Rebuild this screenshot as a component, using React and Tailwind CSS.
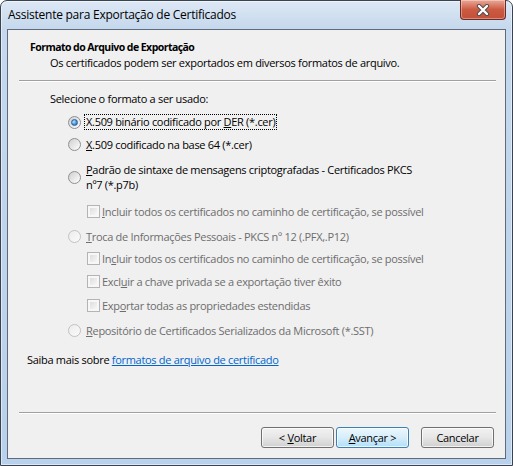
function Radio({ checked, disabled }) {
  if (disabled) {
    return (
      <span className="inline-flex h-[13px] w-[13px] shrink-0 items-center justify-center rounded-full border border-[#c2c2c2] bg-linear-to-br from-[#ececec] to-[#fafafa]" />
    );
  }
  return (
    <span className="inline-flex h-[13px] w-[13px] shrink-0 items-center justify-center rounded-full border border-[#8e8f8f] bg-linear-to-br from-[#cfcfcf] to-[#ffffff]">
      {checked && (
        <span className="h-[7px] w-[7px] rounded-full border border-[#2a5f9a] bg-[radial-gradient(circle_at_35%_35%,#b9e3fc,#3e8ddd_60%,#1e5a9e)]" />
      )}
    </span>
  );
}

function Check() {
  return (
    <span className="inline-flex h-[13px] w-[13px] shrink-0 border border-[#b4b4b4] bg-[#f7f7f7] p-[2px]">
      <span className="h-full w-full bg-linear-to-br from-[#dedede] to-[#f7f7f7]" />
    </span>
  );
}

function Separator({ className }) {
  return <div className={"ml-[11px] mr-[9px] h-[2px] border-t border-b border-t-[#a0a0a0] border-b-white " + className} />;
}

function Button({ children, primary }) {
  if (primary) {
    return (
      <button className="h-[21px] w-[73px] rounded-[3px] border border-[#3c7fb1] bg-linear-to-b from-[#ecf7fd] via-[#d6eefb] to-[#b3def7] text-[11px] leading-[19px] shadow-[inset_0_0_0_1px_rgba(255,255,255,0.7)]">
        {children}
      </button>
    );
  }
  return (
    <button className="h-[21px] w-[73px] rounded-[3px] border border-[#707070] bg-linear-to-b from-[#f2f2f2] via-[#e6e6e6] to-[#d0d0d0] text-[11px] leading-[19px] shadow-[inset_0_0_0_1px_rgba(255,255,255,0.7)]">
      {children}
    </button>
  );
}

export default function App() {
  return (
    <div className="h-[466px] w-[513px] bg-white font-['Open_Sans',sans-serif] text-[11px] tracking-[-0.3px] text-black">
      <div className="flex h-full flex-col rounded-t-[7px] border border-[#3a4350] bg-linear-to-b from-[#dde8f5] via-[#c5d8ed] via-[6%] to-[#b9d1ea] shadow-[inset_0_0_0_1px_rgba(255,255,255,0.5)]">
        {/* title bar */}
        <div className="flex h-[28px] items-start justify-between">
          <span className="pl-[7px] pt-[6px] text-[12px] leading-[16px] tracking-[-0.25px]">Assistente para Exportação de Certificados</span>
          <div className="-mt-px mr-[6px] flex h-[20px] w-[46px] items-center justify-center rounded-b-[4px] border border-t-0 border-[#6b2b22] bg-linear-to-b from-[#e9a898] via-[#cc5a42] to-[#c2503a] shadow-[inset_0_0_0_1px_rgba(255,255,255,0.35)]">
            <svg width="14" height="12" viewBox="0 0 14 12">
              <path d="M3 2 L11 10 M11 2 L3 10" stroke="#4b4b4b" strokeWidth="4.2" strokeLinecap="round" />
              <path d="M3 2 L11 10 M11 2 L3 10" stroke="#ffffff" strokeWidth="2.4" strokeLinecap="round" />
            </svg>
          </div>
        </div>

        {/* client */}
        <div className="mx-[6px] mb-[6px] flex flex-1 flex-col border border-[#5f6b7a] bg-[#f0f0f0]">
          <div className="pl-[22px] pt-[10px]">
            <div className="text-[10.5px] font-bold leading-[15px] tracking-[-0.55px]">Formato do Arquivo de Exportação</div>
            <div className="pl-[20px] leading-[15px]">Os certificados podem ser exportados em diversos formatos de arquivo.</div>
          </div>
          <Separator className="mt-[10px]" />

          <div className="mt-[9px] pl-[42px] leading-[15px]">Selecione o formato a ser usado:</div>

          <div className="flex flex-col pl-[60px] leading-[15px]">
            <div className="mt-[7px] flex h-[18px] items-center gap-[3px]">
              <Radio checked />
              <span className="border border-dotted border-black px-px leading-[14px]">
                X.509 binário codificado por <u>D</u>ER (*.cer)
              </span>
            </div>
            <div className="mt-[5px] flex h-[16px] items-center gap-[3px]">
              <Radio />
              <span className="border border-transparent px-px">
                <u>X</u>.509 codificado na base 64 (*.cer)
              </span>
            </div>
            <div className="mt-[9px] flex items-center gap-[3px]">
              <Radio />
              <span className="border border-transparent px-px">
                <u>P</u>adrão de sintaxe de mensagens criptografadas - Certificados PKCS
                <br />
                nº7 (*.p7b)
              </span>
            </div>
            <div className="mt-[10px] flex h-[16px] items-center gap-[2px] pl-[19px] text-[#6d6d6d]">
              <Check />
              <span>
                <u>I</u>ncluir todos os certificados no caminho de certificação, se possível
              </span>
            </div>
            <div className="mt-[9px] flex h-[16px] items-center gap-[3px] text-[#6d6d6d]">
              <Radio disabled />
              <span className="border border-transparent px-px">
                <u>T</u>roca de Informações Pessoais - PKCS nº 12 (.PFX,.P12)
              </span>
            </div>
            <div className="mt-[6px] flex h-[16px] items-center gap-[2px] pl-[19px] text-[#6d6d6d]">
              <Check />
              <span>
                In<u>c</u>luir todos os certificados no caminho de certificação, se possível
              </span>
            </div>
            <div className="mt-[7px] flex h-[16px] items-center gap-[2px] pl-[19px] text-[#6d6d6d]">
              <Check />
              <span>
                Excl<u>u</u>ir a chave privada se a exportação tiver êxito
              </span>
            </div>
            <div className="mt-[8px] flex h-[16px] items-center gap-[2px] pl-[19px] text-[#6d6d6d]">
              <Check />
              <span>
                Exp<u>o</u>rtar todas as propriedades estendidas
              </span>
            </div>
            <div className="mt-[9px] flex h-[16px] items-center gap-[3px] text-[#6d6d6d]">
              <Radio disabled />
              <span className="border border-transparent px-px">
                <u>R</u>epositório de Certificados Serializados da Microsoft (*.SST)
              </span>
            </div>
          </div>

          <div className="mt-[14px] pl-[19px] leading-[15px]">
            Saiba mais sobre <span className="text-[#0066cc] underline">formatos de arquivo de certificado</span>
          </div>

          <Separator className="mt-[45px]" />

          <div className="mt-[13px] flex justify-end pr-[11px]">
            <Button>
              &lt; <u>V</u>oltar
            </Button>
            <div className="w-[2px]" />
            <Button primary>
              <u>A</u>vançar &gt;
            </Button>
            <div className="w-[12px]" />
            <Button>Cancelar</Button>
          </div>
        </div>
      </div>
    </div>
  );
}
